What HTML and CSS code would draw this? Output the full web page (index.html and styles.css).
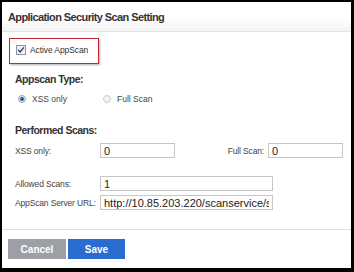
FILE: index.html
```html
<!DOCTYPE html>
<html lang="en">
<head>
  <meta charset="UTF-8">
  <title>Application Security Scan Setting</title>
  <link rel="stylesheet" href="styles.css">
</head>
<body>
  <div class="dialog">
    <div class="header">
      <h1>Application Security Scan Setting</h1>
    </div>

    <div class="content">
      <div class="active-box">
        <svg class="check" width="10" height="10" viewBox="0 0 10 10">
          <rect x="0.5" y="0.5" width="9" height="9" fill="#eef1f6" stroke="#8c93a0"/>
          <path d="M2.3 5 L4.2 7 L7.8 2.4" fill="none" stroke="#2d3d6b" stroke-width="1.4"/>
        </svg>
        <span>Active AppScan</span>
      </div>

      <h2 class="section-title">Appscan Type:</h2>
      <div class="radios">
        <label class="radio">
          <svg width="8" height="8" viewBox="0 0 8 8">
            <circle cx="4" cy="4" r="3.5" fill="#e8ebf0" stroke="#9aa2ae"/>
            <circle cx="4" cy="4" r="2" fill="#2b55a8"/>
          </svg>
          XSS only
        </label>
        <label class="radio off">
          <svg width="8" height="8" viewBox="0 0 8 8">
            <circle cx="4" cy="4" r="3.5" fill="#f2f2f2" stroke="#cccccc"/>
          </svg>
          Full Scan
        </label>
      </div>

      <h2 class="section-title performed">Performed Scans:</h2>
      <div class="row split">
        <div class="field">
          <span class="label">XSS only:</span>
          <input class="short" type="text" value="0">
        </div>
        <div class="field right">
          <span class="label">Full Scan:</span>
          <input class="short" type="text" value="0">
        </div>
      </div>

      <div class="row allowed">
        <span class="label">Allowed Scans:</span>
        <input class="long" type="text" value="1">
      </div>
      <div class="row server">
        <span class="label">AppScan Server URL:</span>
        <input class="long" type="text" value="http://10.85.203.220/scanservice/services">
      </div>
    </div>

    <div class="footer">
      <button class="cancel">Cancel</button>
      <button class="save">Save</button>
    </div>
  </div>
</body>
</html>
```

FILE: styles.css
```css
* {
  box-sizing: border-box;
  margin: 0;
  padding: 0;
}

body {
  background-color: #000;
  font-family: "Liberation Sans", Arial, sans-serif;
  color: #333;
  padding: 2px 3px 4px 2px;
  width: 354px;
  height: 272px;
}

.dialog {
  background-color: #fff;
  height: 266px;
  display: flex;
  flex-direction: column;
}

.header {
  height: 30px;
  flex-shrink: 0;
  background: linear-gradient(#fff, #fff 55%, #f3f3f3);
  border-bottom: 1px solid #e2e2e2;
  display: flex;
  align-items: center;
  padding-left: 6px;
}

.header h1 {
  font-size: 11px;
  font-weight: bold;
  letter-spacing: -0.6px;
  color: #333;
  padding-top: 1px;
}

.content {
  padding: 6px 0 0 13px;
  height: 198px;
  flex-shrink: 0;
  border-bottom: 1px solid #e0e0e0;
}

.active-box {
  width: 90px;
  height: 26px;
  margin-left: -6px;
  border: 1px solid #c2272d;
  box-shadow: 1px 1px 2px #b0b0b0;
  display: flex;
  align-items: flex-start;
  padding: 6px 0 0 6px;
  gap: 4px;
  font-size: 8.5px;
  letter-spacing: -0.1px;
  color: #333;
}

.active-box span {
  line-height: 10px;
}

.section-title {
  font-size: 10.5px;
  line-height: 12px;
  font-weight: bold;
  letter-spacing: -0.5px;
  color: #333;
  margin-top: 9px;
}

.radios {
  display: flex;
  height: 10px;
  margin-top: 9px;
  padding-left: 3px;
  font-size: 8.5px;
  color: #444;
}

.radio {
  display: flex;
  align-items: center;
  gap: 6px;
  width: 85px;
}

.radio svg {
  display: block;
}

.performed {
  margin-top: 20px;
}

.row {
  display: flex;
  align-items: center;
  height: 15px;
  font-size: 8.5px;
  color: #444;
}

.split {
  margin-top: 7px;
  justify-content: space-between;
  padding-right: 8px;
}

.field {
  display: flex;
  align-items: center;
}

.field.right .label {
  width: auto;
  margin-right: 4px;
}

.label {
  width: 85px;
  white-space: nowrap;
  font-size: 8.5px;
  letter-spacing: -0.15px;
}

input {
  height: 15px;
  border: 1px solid #c6c6c6;
  font-family: "Liberation Sans", Arial, sans-serif;
  font-size: 11px;
  color: #222;
  padding: 0 3px;
  outline: none;
}

.short {
  width: 75px;
}

.long {
  width: 173px;
}

.allowed {
  margin-top: 18px;
}

.server {
  margin-top: 4px;
}

.footer {
  display: flex;
  gap: 2px;
  padding: 9px 0 0 6px;
}

.footer button {
  height: 20px;
  border: none;
  color: #fff;
  font-family: "Liberation Sans", Arial, sans-serif;
  font-size: 10px;
  font-weight: bold;
}

.cancel {
  width: 58px;
  background-color: #9ca0a6;
}

.save {
  width: 57px;
  background-color: #2a6cd0;
}
```
